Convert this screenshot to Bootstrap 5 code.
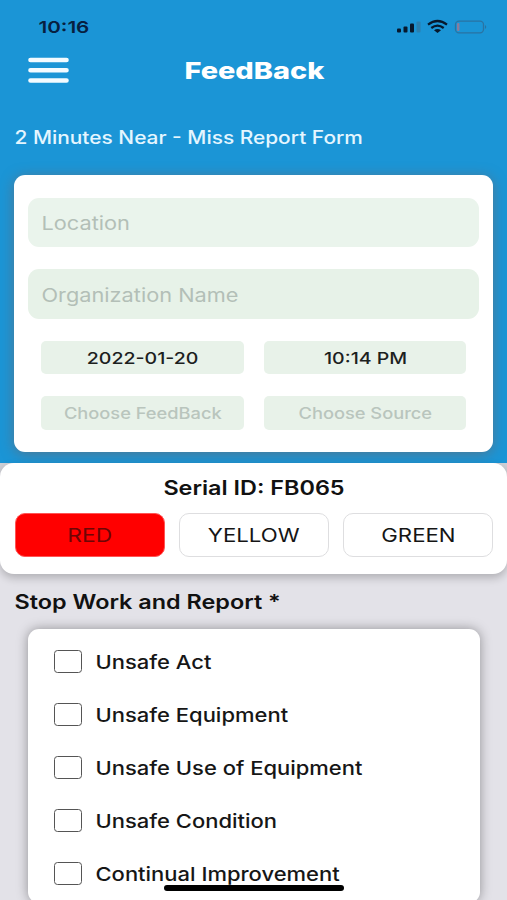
<!DOCTYPE html>
<html lang="en">
<head>
<meta charset="utf-8">
<meta name="viewport" content="width=device-width, initial-scale=1">
<title>FeedBack</title>
<link href="https://cdn.jsdelivr.net/npm/bootstrap@5.3.0/dist/css/bootstrap.min.css" rel="stylesheet">
<style>
body{font-family:Inter,sans-serif;background:#e3e2e8;height:900px;overflow:hidden;line-height:1}
/* wide letterforms */
.wide{display:inline-block;white-space:nowrap;transform:translate(.5px,var(--y,1px)) scaleX(var(--s,1.2))}
.from-left{transform-origin:left}
.app-head{background:#1b95d6;height:463px}
.status{height:53px;padding:0 20px 0 37.5px}
.clock{--s:1.25;font-size:16.5px;font-weight:600;color:#07203f}
.topbar{height:35px}
.topbar h1{--s:1.23;font-size:23.5px;font-weight:800;color:#fff}
.burger{left:28px;top:4px}
.subtitle{--s:1.16;--y:.5px;height:77px;margin-top:10px;padding:0 0 0 14px;font-size:18px;font-weight:500;color:#e4f6ff}
.form-card{margin:0 14px;height:277px;border-radius:11px;padding:22.5px 14px 0 13.5px;box-shadow:0 2px 13px rgba(95,110,125,.8)}
.field{--s:1.175;height:49.5px;border-radius:11px;background:#eaf4ec;padding-left:13.5px;margin-bottom:22px;font-size:18.5px;color:#b3bfb7}
.field + .field{background:#e7f2e8}
.picks{display:grid;grid-template-columns:1fr 1fr;gap:22px 20px;padding:0 13px 0 13.5px}
.pick{--s:1.185;height:33.5px;border-radius:5px;background:#e8f2e9;font-size:16.5px;font-weight:500;color:#1c211e}
.pick.empty{--s:1.155;font-size:15.8px;color:#b9c5bd}
.serial{height:110.5px;border-radius:14px;box-shadow:0 4px 8px rgba(0,0,0,.22);padding:0 14.5px}
.under{background:linear-gradient(#cfd0d6 50%,transparent 50%)}
.serial h2{--s:1.2;font-size:19.5px;font-weight:600;color:#111;height:50px}
.levels{gap:14px}
.level{height:43.5px;border:1.5px solid #dedee0;border-radius:10px;font-size:18.5px;color:#151515}
.level.on{--s:1.23;background:#f00;color:#6d0505;border-color:#f55}
.stop{height:55.5px;padding-left:14px;font-size:19.5px;font-weight:600;color:#111}
.checks{margin:0 27.5px;height:274px;border-radius:11px;padding:5.5px 0 0 26.5px;box-shadow:0 0 12px rgba(0,0,0,.36)}
.check{--s:1.17;--y:1.7px;height:53.1px;gap:12.8px;font-size:18.8px;font-weight:550;color:#161616}
.check input{appearance:none;width:28px;height:23px;border:1.5px solid #555;border-radius:3.5px;background:#fff}
.home-bar{width:180.5px;height:6px;left:163.5px;top:885px}
</style>
</head>
<body>
<header class="app-head">
  <div class="status d-flex align-items-center justify-content-between">
    <span class="wide from-left clock">10:16</span>
    <svg width="92" height="16" viewBox="0 0 92 16">
      <g fill="#07182c"><rect x="2" y="9.500" width="4" height="4" rx="1"/><rect x="8.500" y="7.500" width="4" height="6" rx="1"/><rect x="15" y="4.500" width="4" height="9" rx="1"/></g>
      <rect x="21.500" y="2.500" width="4" height="11" rx="1" fill="#2c7fae"/>
      <g fill="none" stroke="#07182c" stroke-width="2.300"><path d="M33 5.600Q42.500-1.500 52 5.600"/><path d="M36.300 9Q42.500 4.300 48.700 9"/></g>
      <path d="M39 11.300Q42.500 8.800 46 11.300L42.500 14z" fill="#07182c"/>
      <rect x="60.500" y="2.200" width="28" height="11.600" rx="3.500" fill="none" stroke="#2a73a2" stroke-width="1.300"/>
      <rect x="62" y="4" width="2.500" height="8" rx="1" fill="#8a7c9c"/>
      <path d="M90 6Q92.500 8 90 10z" fill="#2a73a2"/>
    </svg>
  </div>
  <div class="topbar position-relative d-flex align-items-center justify-content-center">
    <svg class="burger position-absolute" width="41" height="27" stroke="#f4fbff" stroke-width="4.600" stroke-linecap="round"><path d="M2.500 3H38.500M2.500 13.200H38.500M2.500 23.500H38.500"/></svg>
    <h1 class="m-0"><span class="wide">FeedBack</span></h1>
  </div>
  <div class="subtitle d-flex align-items-center"><span class="wide from-left">2 Minutes Near - Miss Report Form</span></div>
  <form class="form-card bg-white">
    <div class="field d-flex align-items-center"><span class="wide from-left">Location</span></div>
    <div class="field d-flex align-items-center"><span class="wide from-left">Organization Name</span></div>
    <div class="picks">
      <div class="pick d-flex align-items-center justify-content-center"><span class="wide">2022-01-20</span></div>
      <div class="pick d-flex align-items-center justify-content-center"><span class="wide">10:14 PM</span></div>
      <div class="pick empty d-flex align-items-center justify-content-center"><span class="wide">Choose FeedBack</span></div>
      <div class="pick empty d-flex align-items-center justify-content-center"><span class="wide">Choose Source</span></div>
    </div>
  </form>
</header>
<div class="under">
  <section class="serial bg-white">
    <h2 class="m-0 d-flex align-items-center justify-content-center"><span class="wide">Serial ID: FB065</span></h2>
    <div class="levels d-flex">
      <button type="button" class="btn level on flex-fill w-100 p-0"><span class="wide">RED</span></button>
      <button type="button" class="btn level flex-fill w-100 p-0"><span class="wide">YELLOW</span></button>
      <button type="button" class="btn level flex-fill w-100 p-0"><span class="wide">GREEN</span></button>
    </div>
  </section>
</div>
<div class="stop d-flex align-items-center"><span class="wide from-left">Stop Work and Report *</span></div>
<section class="checks bg-white">
  <label class="check d-flex align-items-center"><input type="checkbox"><span class="wide from-left">Unsafe Act</span></label>
  <label class="check d-flex align-items-center"><input type="checkbox"><span class="wide from-left">Unsafe Equipment</span></label>
  <label class="check d-flex align-items-center"><input type="checkbox"><span class="wide from-left">Unsafe Use of Equipment</span></label>
  <label class="check d-flex align-items-center"><input type="checkbox"><span class="wide from-left">Unsafe Condition</span></label>
  <label class="check d-flex align-items-center"><input type="checkbox"><span class="wide from-left">Continual Improvement</span></label>
</section>
<div class="home-bar position-absolute bg-black rounded-pill"></div>
<script src="https://cdn.jsdelivr.net/npm/bootstrap@5.3.0/dist/js/bootstrap.bundle.min.js"></script>
</body>
</html>
